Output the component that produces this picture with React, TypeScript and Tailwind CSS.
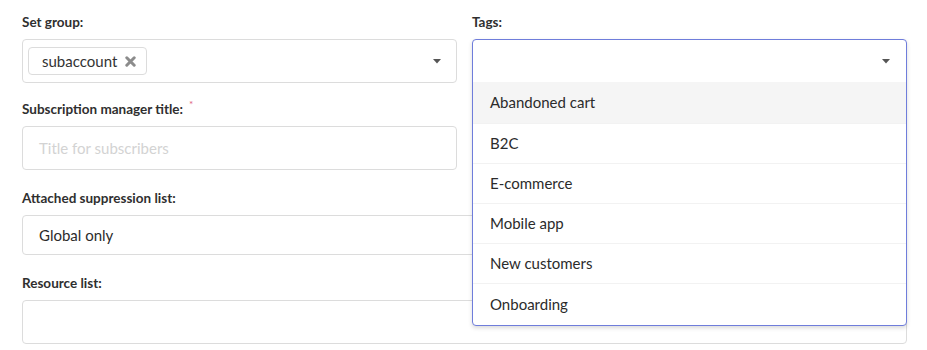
import React from 'react';

const TAGS = ['Abandoned cart', 'B2C', 'E-commerce', 'Mobile app', 'New customers', 'Onboarding'];

const Caret: React.FC = () => (
    <svg width="8" height="5" viewBox="0 0 8 5" className="shrink-0">
        <path d="M0 0 H8 L4 4.5 Z" fill="#555" />
    </svg>
);

const RemoveIcon: React.FC = () => (
    <svg width="11" height="11" viewBox="0 0 11 11" className="shrink-0">
        <path d="M1.8 1.8 L9.2 9.2 M9.2 1.8 L1.8 9.2" stroke="#8c8c8c" strokeWidth="3" strokeLinecap="round" />
    </svg>
);

const Label: React.FC<{ text: string; required?: boolean }> = ({ text, required }) => (
    <div className="h-[17px] leading-[17px] text-[13.5px] font-bold text-[#2f2f2f] mb-2 flex items-start">
        {text}
        {required && <span className="ml-[6px] -mt-[5px] text-[10px] text-[#e0607e] font-normal">*</span>}
    </div>
);

const TagsDropdown: React.FC = () => (
    <div className="absolute left-0 right-0 top-0 z-10 rounded-[4px] border border-[#6f7ddb] bg-white shadow-[0_2px_4px_rgba(0,0,0,0.15)] overflow-hidden">
        <div className="h-[42px] flex items-center justify-end pr-[16px]">
            <Caret />
        </div>
        <ul>
            {TAGS.map((tag, i) => (
                <li
                    key={tag}
                    className={`flex items-center pl-[17px] text-[15px] text-[#2b2b2b] ${i === 0 ? 'h-[41px] bg-[#f5f5f5]' : 'border-t border-[#f2f2f2]'} ${i === TAGS.length - 1 ? 'h-[42px]' : i > 0 ? 'h-[40px]' : ''}`}
                >
                    {tag}
                </li>
            ))}
        </ul>
    </div>
);

export default function App() {
    return (
        <div className="w-[927px] h-[350px] overflow-hidden bg-white pt-[14px] pl-[22px] pr-[20px]" style={{ fontFamily: 'Lato, sans-serif' }}>
            <div className="grid grid-cols-2 gap-x-[15px]">
                {/* Set group */}
                <div>
                    <Label text="Set group:" />
                    <div className="h-[44px] rounded-[4px] border border-[#dcdcdc] flex items-center pl-[5px] pr-[15px]">
                        <span className="h-[28px] flex items-center gap-[8px] rounded-[4px] border border-[#dcdcdc] pl-[13px] pr-[10px] text-[15px] text-[#333]">
                            subaccount
                            <RemoveIcon />
                        </span>
                        <span className="flex-1" />
                        <Caret />
                    </div>
                </div>

                {/* Tags */}
                <div>
                    <Label text="Tags:" />
                    <div className="relative h-[44px]">
                        <TagsDropdown />
                    </div>
                </div>

                {/* Subscription manager title */}
                <div className="mt-[18px]">
                    <Label text="Subscription manager title:" required />
                    <div className="h-[44px] rounded-[4px] border border-[#dcdcdc] flex items-center px-[16px]">
                        <span className="text-[15px] text-[#d3d3d3]">Title for subscribers</span>
                    </div>
                </div>
                <div />
            </div>

            <div className="mt-[20px]">
                <Label text="Attached suppression list:" />
                <div className="h-[40px] rounded-[4px] border border-[#dcdcdc] flex items-center px-[16px] text-[15px] text-[#2b2b2b]">
                    Global only
                </div>
            </div>

            <div className="mt-[20px]">
                <Label text="Resource list:" />
                <div className="h-[44px] rounded-[4px] border border-[#dcdcdc]" />
            </div>
        </div>
    );
}
